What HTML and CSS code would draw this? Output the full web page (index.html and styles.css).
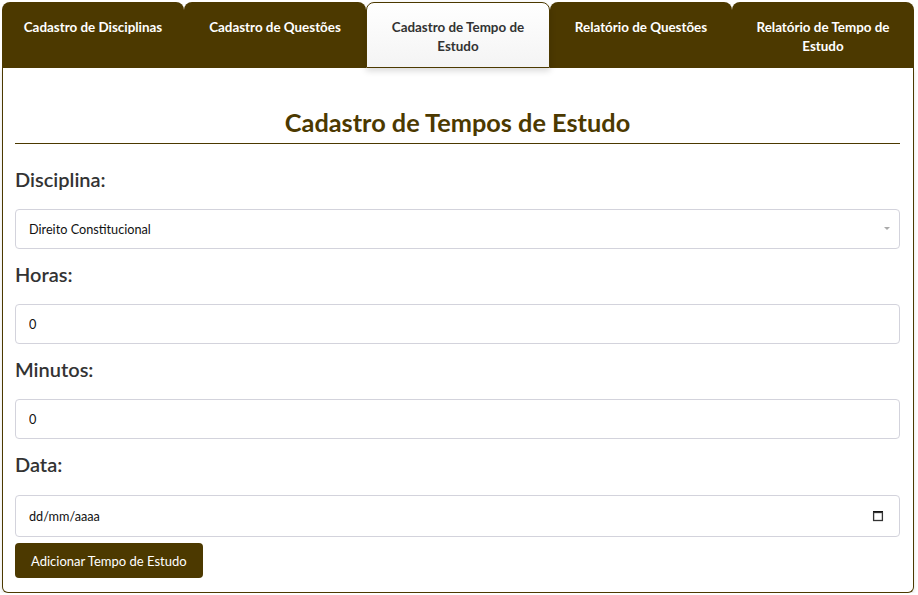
FILE: index.html
```html
<!DOCTYPE html>
<html lang="pt-BR">
<head>
<meta charset="utf-8">
<title>Cadastro de Tempos de Estudo</title>
<link rel="stylesheet" href="styles.css">
</head>
<body>
<div class="app">
  <nav class="tabs">
    <div class="tab">Cadastro de Disciplinas</div>
    <div class="tab">Cadastro de Questões</div>
    <div class="tab active">Cadastro de Tempo de Estudo</div>
    <div class="tab">Relatório de Questões</div>
    <div class="tab">Relatório de Tempo de Estudo</div>
  </nav>
  <main class="panel">
    <h2 class="title">Cadastro de Tempos de Estudo</h2>
    <hr class="rule">
    <form class="form">
      <label class="label">Disciplina:</label>
      <div class="select-wrap">
        <select class="control select">
          <option>Direito Constitucional</option>
        </select>
        <span class="caret"></span>
      </div>
      <label class="label">Horas:</label>
      <input class="control" type="text" value="0">
      <label class="label">Minutos:</label>
      <input class="control" type="text" value="0">
      <label class="label label-date">Data:</label>
      <div class="control date">
        <span>dd/mm/aaaa</span>
        <svg class="cal" width="12" height="12" viewBox="0 0 12 12">
          <rect x="1" y="1" width="10" height="2" fill="#111"/>
          <rect x="1.6" y="2.5" width="8.8" height="8" fill="none" stroke="#333" stroke-width="1.3"/>
        </svg>
      </div>
      <button type="button" class="btn">Adicionar Tempo de Estudo</button>
    </form>
  </main>
</div>
</body>
</html>
```
FILE: styles.css
```css
* { box-sizing: border-box; }
html, body { margin: 0; padding: 0; background: #ffffff; }
body { font-family: Lato, "Noto Sans", "Liberation Sans", sans-serif; color: #333; }
.app { padding: 2px 4px 0 2px; }
.tabs { display: flex; height: 66px; }
.tab {
  flex: 1 1 0;
  background: #4c3900;
  color: #ffffff;
  font-weight: 700;
  font-size: 13.4px;
  line-height: 19px;
  text-align: center;
  padding: 16px 16px 0;
  border-radius: 8px 8px 0 0;
}
.tab.active {
  background: linear-gradient(#ffffff, #f4f4f4);
  color: #333;
  border: 1px solid #4c3900;
  padding-top: 15px;
  box-shadow: 0 3px 6px rgba(0,0,0,0.15);
  position: relative;
  z-index: 1;
}
.panel {
  border: 1px solid #4c3900;
  border-top: none;
  border-radius: 0 0 6px 6px;
  padding: 40px 13px 14px 12px;
  box-shadow: 0 2px 4px rgba(0,0,0,0.12);
}
.title {
  margin: 0;
  text-align: center;
  color: #4c3900;
  font-size: 25.3px;
  line-height: 28px;
  font-weight: 700;
}
.rule {
  margin: 7px 0 0;
  border: none;
  border-top: 1px solid #4c3900;
}
.form { display: flex; flex-direction: column; }
.label {
  font-size: 20px;
  line-height: 24px;
  font-weight: 600;
  color: #333;
  margin: 13px 0 18px;
}
.form .label:first-child { margin-top: 23px; }
.form .label-date { margin-bottom: 19px; }
.control {
  width: 100%;
  height: 40px;
  border: 1px solid #d3d3dc;
  border-radius: 4px;
  padding: 0 13px;
  font-family: inherit;
  font-size: 12.7px;
  color: #111;
  background: #fff;
}
.select-wrap { position: relative; }
.select { appearance: none; -webkit-appearance: none; outline: none; }
.caret {
  position: absolute;
  right: 10px;
  top: 18px;
  width: 0; height: 0;
  border-left: 3px solid transparent;
  border-right: 3px solid transparent;
  border-top: 3px solid #aaa;
}
.date {
  height: 42px;
  display: flex;
  align-items: center;
  justify-content: space-between;
  padding-right: 15px;
}
.cal { display: block; }
.btn {
  align-self: flex-start;
  margin-top: 6px;
  height: 35px;
  padding: 0 16px;
  background: #4c3900;
  color: #fff;
  border: none;
  border-radius: 4px;
  font-family: inherit;
  font-size: 13px;
}
```
